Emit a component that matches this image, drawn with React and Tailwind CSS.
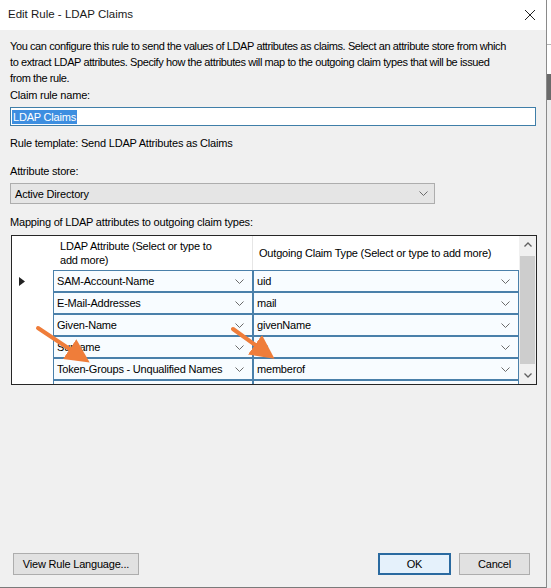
import React from 'react';

// Edit Rule dialog - LDAP claims mapping
const rows = [
  { attr: 'SAM-Account-Name', claim: 'uid' },
  { attr: 'E-Mail-Addresses', claim: 'mail' },
  { attr: 'Given-Name', claim: 'givenName' },
  { attr: 'Surname', claim: 'sn' },
  { attr: 'Token-Groups - Unqualified Names', claim: 'memberof' },
];

function Chevron({ className = '' }) {
  return (
    <svg width="9" height="5" viewBox="0 0 9 5" className={className}>
      <polyline points="0.5,0.5 4.5,4.5 8.5,0.5" fill="none" stroke="#6b6b6b" strokeWidth="1" />
    </svg>
  );
}

function CellCombo({ value }) {
  return (
    <div className="h-full flex items-center justify-between border border-[#4a80aa] bg-[#f8fcff] pl-[3px] pr-[8px]">
      <span className="whitespace-nowrap">{value}</span>
      <Chevron />
    </div>
  );
}

function Arrow({ x1, y1, x2, y2 }) {
  return (
    <svg className="absolute left-0 top-0 pointer-events-none" width="551" height="588">
      <defs>
        <marker id={`head-${x1}`} markerWidth="6" markerHeight="6" refX="4" refY="3" orient="auto" markerUnits="strokeWidth">
          <polygon points="0,0 6,3 0,6" fill="#ef7d3a" />
        </marker>
      </defs>
      <line x1={x1} y1={y1} x2={x2} y2={y2} stroke="#ef7d3a" strokeWidth="4" strokeLinecap="round" markerEnd={`url(#head-${x1})`} />
    </svg>
  );
}

export default function App() {
  return (
    <div className="relative w-[551px] h-[588px] overflow-hidden bg-white text-[11px] tracking-[-0.2px] text-black" style={{ fontFamily: '"Liberation Sans", Arial, sans-serif' }}>
      <div className="flex h-full">
        <div className="w-[547px] h-full flex flex-col border-r border-[#8a8a8a]">
          {/* title bar */}
          <div className="h-[30px] shrink-0 bg-white flex items-center justify-between pl-[8px] pr-[10px]">
            <span className="text-[11.5px] tracking-normal text-[#1a1a1a]">Edit Rule - LDAP Claims</span>
            <svg width="12" height="12" viewBox="0 0 12 12">
              <path d="M1 1 L11 11 M11 1 L1 11" stroke="#222" strokeWidth="1" />
            </svg>
          </div>

          {/* body */}
          <div className="flex-1 bg-[#f0f0f0] flex flex-col px-[10px] pt-[8px] leading-[16px] border-b border-[#7a7a7a]">
            <p className="whitespace-nowrap tracking-[-0.4px]">
              You can configure this rule to send the values of LDAP attributes as claims. Select an attribute store from which
              <br />
              to extract LDAP attributes. Specify how the attributes will map to the outgoing claim types that will be issued
              <br />
              from the rule.
            </p>

            <div className="mt-[1px]">Claim rule name:</div>
            <div className="mt-[4px] h-[19px] w-[526px] border border-[#3f7ea8] bg-white flex items-center pl-[1px]">
              <span className="bg-[#3d8ee0] text-white px-[1px] leading-[14px]">LDAP Claims</span>
            </div>

            <div className="mt-[9px]">Rule template: Send LDAP Attributes as Claims</div>

            <div className="mt-[12px]">Attribute store:</div>
            <div className="mt-[4px] h-[21px] w-[425px] border border-[#adadad] bg-[#e5e5e5] flex items-center justify-between pl-[4px] pr-[6px]">
              <span>Active Directory</span>
              <Chevron />
            </div>

            <div className="mt-[10px]">Mapping of LDAP attributes to outgoing claim types:</div>

            {/* grid */}
            <div className="mt-[5px] ml-[1px] w-[526px] h-[150px] border border-[#262626] bg-white flex overflow-hidden">
              <div className="flex-1 flex flex-col">
                <div className="h-[34px] shrink-0 flex bg-white">
                  <div className="w-[41px]" />
                  <div className="w-[200px] border-r border-[#e6e6e6] pl-[7px] pt-[3px] leading-[14px]">
                    LDAP Attribute (Select or type to
                    <br />
                    add more)
                  </div>
                  <div className="flex-1 flex items-center pl-[6px] whitespace-nowrap">Outgoing Claim Type (Select or type to add more)</div>
                </div>
                {rows.concat([{ attr: '', claim: '' }]).map((r, i) => (
                  <div key={i} className="h-[22px] shrink-0 flex">
                    <div className="w-[41px] bg-white flex items-center pl-[7px]">
                      {i === 0 && (
                        <svg width="6" height="9" viewBox="0 0 6 9">
                          <polygon points="0,0 6,4.5 0,9" fill="#222" />
                        </svg>
                      )}
                    </div>
                    <div className="w-[200px] bg-white">
                      <CellCombo value={r.attr} />
                    </div>
                    <div className="flex-1 bg-white">
                      <CellCombo value={r.claim} />
                    </div>
                  </div>
                ))}
              </div>

              {/* vertical scrollbar */}
              <div className="w-[17px] shrink-0 bg-[#f0f0f0] flex flex-col">
                <div className="h-[17px] flex items-center justify-center">
                  <svg width="8" height="5" viewBox="0 0 8 5">
                    <polyline points="0.5,4.5 4,1 7.5,4.5" fill="none" stroke="#606060" strokeWidth="1.3" />
                  </svg>
                </div>
                <div className="flex-1 px-[1px] py-[3px]">
                  <div className="h-full bg-[#cdcdcd]" />
                </div>
                <div className="h-[17px] flex items-center justify-center">
                  <svg width="8" height="5" viewBox="0 0 8 5">
                    <polyline points="0.5,0.5 4,4 7.5,0.5" fill="none" stroke="#606060" strokeWidth="1.3" />
                  </svg>
                </div>
              </div>
            </div>

            {/* buttons */}
            <div className="mt-auto mb-[12px] flex items-center">
              <button className="ml-[3px] h-[22px] w-[126px] border border-[#adadad] bg-[#e1e1e1]">View Rule Language...</button>
              <button className="ml-auto h-[22px] w-[73px] border-2 border-[#2a6aa0] bg-[#e5f1fb]">OK</button>
              <button className="ml-[8px] mr-[6px] h-[22px] w-[71px] border border-[#adadad] bg-[#e1e1e1]">Cancel</button>
            </div>
          </div>
        </div>

        {/* window behind the dialog */}
        <div className="flex-1 flex flex-col bg-white">
          <div className="h-[45px] border-b border-[#b5b5b5]" />
          <div className="h-[29px]" />
          <div className="h-[26px] bg-[#6a6a6a]" />
          <div className="flex-1 bg-[#ededed]" />
        </div>
      </div>

      {/* annotation arrows */}
      <Arrow x1={38} y1={328} x2={83} y2={358} />
      <Arrow x1={233} y1={329} x2={268} y2={354} />
    </div>
  );
}
